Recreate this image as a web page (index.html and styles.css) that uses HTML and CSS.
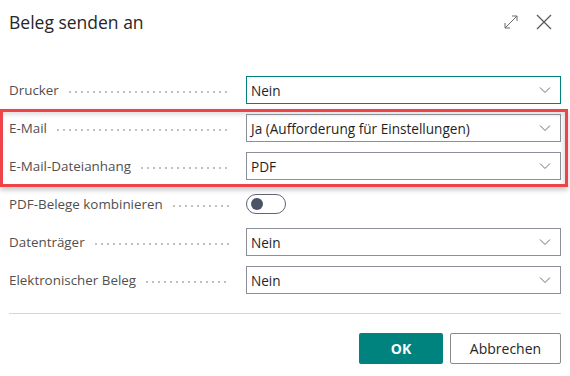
FILE: index.html
```html
<!DOCTYPE html>
<html lang="de">
<head>
    <meta charset="UTF-8">
    <meta name="viewport" content="width=device-width, initial-scale=1.0">
    <title>Beleg senden an</title>
    <link rel="stylesheet" href="styles.css">
</head>
<body>
    <div class="dialog">
        <header class="dialog-head">
            <h1 class="dialog-title">Beleg senden an</h1>
            <div class="head-actions">
                <svg class="head-icon" width="16" height="16" viewBox="0 0 16 16">
                    <path d="M2 14 L14 2 M9 2 H14 V7 M2 9 V14 H7" fill="none" stroke="#6b6b6b" stroke-width="1"/>
                </svg>
                <svg class="head-icon" width="18" height="18" viewBox="0 0 18 18">
                    <path d="M2 2 L16 16 M16 2 L2 16" fill="none" stroke="#5a5a5a" stroke-width="1.3"/>
                </svg>
            </div>
        </header>

        <div class="form">
            <div class="row">
                <div class="caption"><span>Drucker</span><i class="leader"></i></div>
                <div class="select focused"><span>Nein</span><svg class="chevron" width="12" height="8" viewBox="0 0 12 8"><path d="M1 1.5 L6 6.5 L11 1.5" fill="none" stroke="#6b6f78" stroke-width="1"/></svg></div>
            </div>

            <div class="group">
                <div class="row">
                    <div class="caption"><span>E-Mail</span><i class="leader"></i></div>
                    <div class="select"><span>Ja (Aufforderung für Einstellungen)</span><svg class="chevron" width="12" height="8" viewBox="0 0 12 8"><path d="M1 1.5 L6 6.5 L11 1.5" fill="none" stroke="#6b6f78" stroke-width="1"/></svg></div>
                </div>
                <div class="row">
                    <div class="caption"><span>E-Mail-Dateianhang</span><i class="leader"></i></div>
                    <div class="select"><span>PDF</span><svg class="chevron" width="12" height="8" viewBox="0 0 12 8"><path d="M1 1.5 L6 6.5 L11 1.5" fill="none" stroke="#6b6f78" stroke-width="1"/></svg></div>
                </div>
            </div>

            <div class="row">
                <div class="caption"><span>PDF-Belege kombinieren</span><i class="leader"></i></div>
                <div class="toggle-cell"><span class="toggle"><span class="knob"></span></span></div>
            </div>

            <div class="row">
                <div class="caption"><span>Datenträger</span><i class="leader"></i></div>
                <div class="select"><span>Nein</span><svg class="chevron" width="12" height="8" viewBox="0 0 12 8"><path d="M1 1.5 L6 6.5 L11 1.5" fill="none" stroke="#6b6f78" stroke-width="1"/></svg></div>
            </div>

            <div class="row">
                <div class="caption"><span>Elektronischer Beleg</span><i class="leader"></i></div>
                <div class="select"><span>Nein</span><svg class="chevron" width="12" height="8" viewBox="0 0 12 8"><path d="M1 1.5 L6 6.5 L11 1.5" fill="none" stroke="#6b6f78" stroke-width="1"/></svg></div>
            </div>
        </div>

        <footer class="dialog-foot">
            <button class="btn btn-primary">OK</button>
            <button class="btn">Abbrechen</button>
        </footer>
    </div>
</body>
</html>
```

FILE: styles.css
```css
body {
    margin: 0px;
    padding: 0px;
    background-color: #fff;
    font-family: "Open Sans", "Noto Sans", sans-serif;
    color: #212121;
}

.dialog {
    width: 570px;
    height: 376px;
    box-sizing: border-box;
    padding: 8px 9px 0 9px;
}

.dialog-head {
    display: flex;
    justify-content: space-between;
    align-items: center;
    height: 28px;
}

.dialog-title {
    margin: 0;
    font-size: 17.5px;
    font-weight: 400;
    line-height: 28px;
    color: #262626;
}

.head-actions {
    display: flex;
    align-items: center;
    gap: 16px;
    padding-right: 8px;
}

.head-icon {
    display: block;
}

.form {
    margin-top: 40px;
}

.row {
    display: flex;
    align-items: center;
    height: 28px;
    margin-bottom: 10px;
}

.caption {
    width: 237px;
    flex: none;
    display: flex;
    align-items: center;
    font-size: 13.4px;
    color: #505050;
}

.leader {
    flex: 1;
    height: 2px;
    margin: 3px 16px 0 8px;
    background-image: radial-gradient(circle, #c0c0c0 0.8px, transparent 1.1px);
    background-size: 6px 2px;
}

.select {
    flex: 1;
    height: 28px;
    box-sizing: border-box;
    border: 1px solid #8a8f98;
    display: flex;
    align-items: center;
    justify-content: space-between;
    padding: 0 9px 0 4px;
    font-size: 13.6px;
    color: #1f1f1f;
}

.select.focused {
    border-color: #00807f;
}

.chevron {
    display: block;
}

.group {
    margin: -5px -7px 3px -9px;
    padding: 2px 4px 4px 6px;
    border: 3px solid #ee4449;
    box-shadow: 0 3px 5px rgba(0, 0, 0, 0.22), inset -2px 3px 4px rgba(0, 0, 0, 0.12);
}

.group .row:last-child {
    margin-bottom: 0;
}

.toggle-cell {
    flex: 1;
}

.toggle {
    display: flex;
    align-items: center;
    width: 40px;
    height: 20px;
    box-sizing: border-box;
    border: 1px solid #5d6473;
    border-radius: 10px;
    padding-left: 4px;
}

.knob {
    width: 12px;
    height: 12px;
    border-radius: 50%;
    background-color: #4b5366;
}

.dialog-foot {
    margin-top: 19px;
    border-top: 1px solid #d6d6d6;
    padding-top: 19px;
    display: flex;
    justify-content: flex-end;
    gap: 7px;
}

.btn {
    height: 31px;
    width: 111px;
    box-sizing: border-box;
    border: 1px solid #8a8a8a;
    border-radius: 2px;
    background-color: #fff;
    font-family: "Open Sans", "Noto Sans", sans-serif;
    font-size: 14px;
    color: #262626;
    cursor: pointer;
}

.btn-primary {
    width: 84px;
    border: none;
    background-color: #00827f;
    color: #fff;
    font-weight: 700;
}
```
